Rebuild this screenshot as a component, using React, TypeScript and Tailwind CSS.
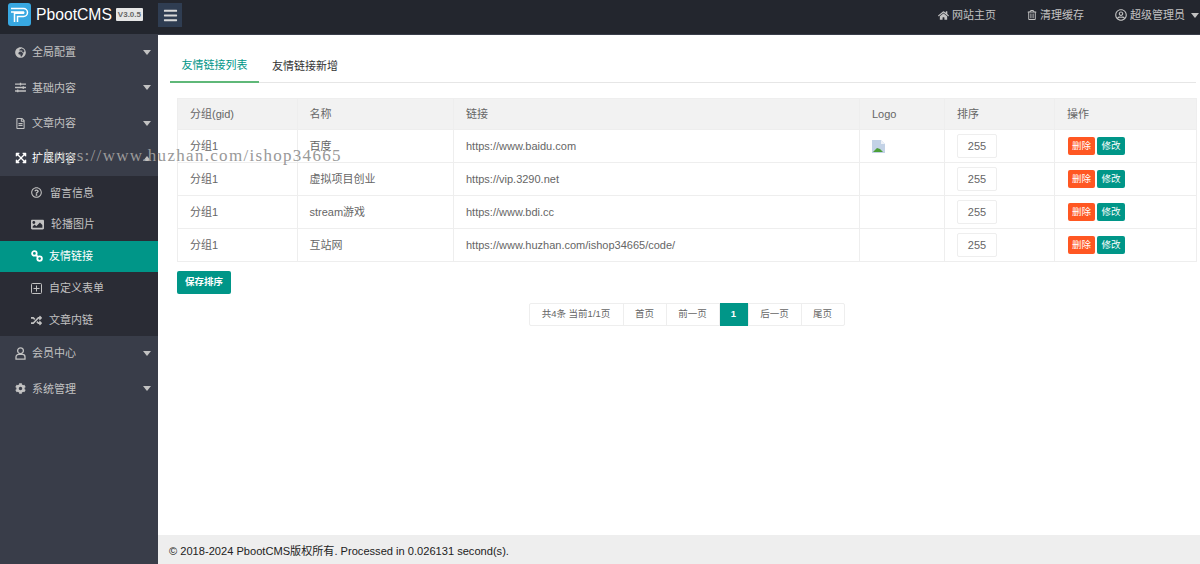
import {
  FaBars, FaCog, FaExpandArrowsAlt, FaGlobeAfrica, FaHome, FaImage,
  FaRandom, FaRegFileAlt, FaRegQuestionCircle, FaRegTrashAlt, FaRegUserCircle, FaSlidersH,
} from "react-icons/fa";

const links = [
  { name: "百度", url: "https://www.baidu.com", logo: true },
  { name: "虚拟项目创业", url: "https://vip.3290.net" },
  { name: "stream游戏", url: "https://www.bdi.cc" },
  { name: "互站网", url: "https://www.huzhan.com/ishop34665/code/" },
];

function Logo() {
  return (
    <svg width="23" height="23" viewBox="0 0 23 23" className="shrink-0">
      <rect width="23" height="23" rx="3" fill="#38a8e2" />
      <path d="M3 5.5h12.5a4 4 0 0 1 0 8H9.5V19" fill="none" stroke="#fff" strokeWidth="1.5" />
      <path d="M3 9h12.5a.8.8 0 0 1 0 1.2H6.5V19" fill="none" stroke="#fff" strokeWidth="1.5" />
    </svg>
  );
}

function BrokenImage() {
  return (
    <svg width="14" height="13" viewBox="0 0 14 13">
      <path d="M0 0h9l4 4v9H0z" fill="#c3d2e6" />
      <path d="M9 0l4 4H9z" fill="#eef2f7" />
      <path d="M1 12l4-4 3 1 3 3z" fill="#4c9f38" />
    </svg>
  );
}

function LinkIcon() {
  return (
    <svg width="12" height="12" viewBox="0 0 12 12" fill="none" stroke="currentColor" strokeWidth="1.8">
      <circle cx="3.4" cy="3.4" r="2.3" />
      <circle cx="8.6" cy="8.6" r="2.3" />
      <path d="M4.8 4.8l2.4 2.4" />
    </svg>
  );
}

function GridIcon() {
  return (
    <svg width="11" height="11" viewBox="0 0 11 11" fill="none" stroke="currentColor" strokeWidth="1">
      <rect x=".5" y=".5" width="10" height="10" rx="1" />
      <path d="M5.5 2.5v6M2.5 5.5h6" />
    </svg>
  );
}

function UserIcon() {
  return (
    <svg width="11" height="13" viewBox="0 0 11 13" fill="none" stroke="currentColor" strokeWidth="1.3">
      <circle cx="5.5" cy="3.7" r="2.9" />
      <path d="M1 12.2V10a2.6 2.6 0 0 1 2.6-2.6h3.8A2.6 2.6 0 0 1 10 10v2.2z" />
    </svg>
  );
}

function Caret({ up }: { up?: boolean }) {
  return up ? (
    <span className="block h-0 w-0 border-x-[4.5px] border-b-[5px] border-x-transparent border-b-[#c2c2c2]" />
  ) : (
    <span className="block h-0 w-0 border-x-[4.5px] border-t-[5px] border-x-transparent border-t-[#c2c2c2]" />
  );
}

function MainItem({ icon, label, open, active }: { icon: React.ReactNode; label: string; open?: boolean; active?: boolean }) {
  return (
    <div className={`flex h-[35.25px] items-center pl-[15px] pr-[7px] text-[11px] ${active ? "text-white" : "text-[#c2c2c2]"}`}>
      <span className="flex w-[17px] justify-start text-[11px]">{icon}</span>
      <span className="flex-1">{label}</span>
      <Caret up={open} />
    </div>
  );
}

function SubItem({ icon, label, active, gap }: { icon: React.ReactNode; label: string; active?: boolean; gap: string }) {
  return (
    <div className={`flex h-[31.8px] items-center pl-[31px] text-[11px] ${gap} ${active ? "bg-[#009688] text-white" : "text-[#c2c2c2]"}`}>
      {icon}
      <span>{label}</span>
    </div>
  );
}

function Sidebar() {
  return (
    <aside className="w-[158px] shrink-0 bg-[#393d49]">
      <MainItem icon={<FaGlobeAfrica />} label="全局配置" />
      <MainItem icon={<FaSlidersH />} label="基础内容" />
      <MainItem icon={<FaRegFileAlt />} label="文章内容" />
      <MainItem icon={<FaExpandArrowsAlt className="text-[12px] text-white" />} label="扩展内容" open active />
      <div className="bg-[#2a2c35] pt-px">
        <SubItem icon={<FaRegQuestionCircle className="text-[11px]" />} label="留言信息" gap="gap-[8px]" />
        <SubItem icon={<FaImage className="text-[13px]" />} label="轮播图片" gap="gap-[7px]" />
        <SubItem icon={<LinkIcon />} label="友情链接" active gap="gap-[6px]" />
        <SubItem icon={<GridIcon />} label="自定义表单" gap="gap-[7px]" />
        <SubItem icon={<FaRandom className="text-[11px]" />} label="文章内链" gap="gap-[7px]" />
      </div>
      <MainItem icon={<UserIcon />} label="会员中心" />
      <MainItem icon={<FaCog />} label="系统管理" />
    </aside>
  );
}

function Header() {
  return (
    <header className="flex h-[35px] shrink-0 items-center border-b border-[#393d49] bg-[#23262e] pb-[4px] text-[11px] text-[#c2c2c2]">
      <div className="ml-[8px] flex items-center">
        <Logo />
        <span className="ml-[5px] text-[15.7px] text-white">PbootCMS</span>
        <span className="ml-[4px] rounded-[1px] bg-[#e6e6e6] px-[2px] py-px text-[8px] font-bold leading-[11px] text-[#666]">V3.0.5</span>
      </div>
      <div className="ml-[15px] flex h-[24px] w-[24px] items-center justify-center bg-[#2f3d52]">
        <FaBars className="text-[15px] text-[#d9d9d9]" />
      </div>
      <div className="ml-auto flex items-center pr-px">
        <span className="flex items-center gap-[3px]"><FaHome className="text-[11px]" />网站主页</span>
        <span className="ml-[31px] flex items-center gap-[3px]"><FaRegTrashAlt className="text-[10px]" />清理缓存</span>
        <span className="ml-[31px] flex items-center gap-[3px]"><FaRegUserCircle className="text-[12px]" />超级管理员<span className="ml-[3px]"><Caret /></span></span>
      </div>
    </header>
  );
}

function LinkTable() {
  const cell = "border border-[#eeeeee] px-[12px] font-normal text-left";
  return (
    <table className="w-[1019px] table-fixed border-collapse text-[11px] text-[#666]">
      <colgroup>
        <col className="w-[119.5px]" />
        <col className="w-[156.5px]" />
        <col className="w-[406px]" />
        <col className="w-[85px]" />
        <col className="w-[110px]" />
        <col className="w-[142px]" />
      </colgroup>
      <thead>
        <tr className="h-[31px] bg-[#f2f2f2]">
          {["分组(gid)", "名称", "链接", "Logo", "排序", "操作"].map((h) => (
            <th key={h} className={cell}>{h}</th>
          ))}
        </tr>
      </thead>
      <tbody>
        {links.map((l) => (
          <tr key={l.url} className="h-[33px]">
            <td className={cell}>分组1</td>
            <td className={cell}>{l.name}</td>
            <td className={cell}>{l.url}</td>
            <td className={cell}>{l.logo && <BrokenImage />}</td>
            <td className={cell}>
              <div className="flex h-[24px] w-[40px] items-center justify-center rounded-[2px] border border-[#eeeeee]">255</div>
            </td>
            <td className={cell}>
              <div className="ml-px flex gap-[2px] text-[9.5px] text-white">
                <span className="flex h-[18px] w-[27px] items-center justify-center rounded-[2px] bg-[#ff5722]">删除</span>
                <span className="flex h-[18px] w-[28px] items-center justify-center rounded-[2px] bg-[#009688]">修改</span>
              </div>
            </td>
          </tr>
        ))}
      </tbody>
    </table>
  );
}

function Pagination() {
  const items = [
    { t: "共4条 当前1/1页", w: "w-[93px]" },
    { t: "首页", w: "w-[43px]" },
    { t: "前一页", w: "w-[53px]" },
    { t: "1", w: "w-[29px]", on: true },
    { t: "后一页", w: "w-[53px]" },
    { t: "尾页", w: "w-[43px]" },
  ];
  return (
    <div className="mt-[9px] flex justify-center">
      <div className="flex h-[23px] rounded-[2px] border border-[#eeeeee] text-[9.5px] text-[#666]">
        {items.map((i, n) => (
          <span
            key={i.t}
            className={`flex items-center justify-center ${i.w} ${n > 0 ? "border-l border-[#eeeeee]" : ""} ${i.on ? "-my-px h-[23px] bg-[#009688] font-bold text-white" : ""}`}
          >
            {i.t}
          </span>
        ))}
      </div>
    </div>
  );
}

export default function App() {
  return (
    <div className="flex h-screen flex-col overflow-hidden bg-white font-['Liberation_Sans','Noto_Sans_CJK_SC',sans-serif]">
      <Header />
      <div className="relative flex min-h-0 flex-1">
        <Sidebar />
        <main className="flex min-w-0 flex-1 flex-col">
          <div className="flex-1 pl-[12px] pr-[4px] pt-[15px]">
            <div className="flex h-[33px] border-b border-[#e6e6e6] text-[11px] text-[#333]">
              <span className="-mb-px flex w-[89px] items-center justify-center border-b-2 border-[#5fb878] text-[#009688]">友情链接列表</span>
              <span className="flex w-[92px] items-center justify-center">友情链接新增</span>
            </div>
            <div className="mt-[15px] pl-[7px]">
              <LinkTable />
              <button className="mt-[9px] block h-[23px] w-[54px] rounded-[2px] bg-[#009688] text-[9.5px] font-bold text-white">保存排序</button>
              <Pagination />
            </div>
          </div>
          <footer className="flex h-[29px] shrink-0 items-center bg-[#eeeeee] pl-[11px] pt-[4px] text-[11.1px] text-[#222]">
            © 2018-2024 PbootCMS版权所有. Processed in 0.026131 second(s).
          </footer>
        </main>
        {/* watermark over the page */}
        <div className="pointer-events-none absolute left-[45px] top-[108px] whitespace-nowrap font-['Liberation_Serif',serif] text-[17px] tracking-[1.3px] text-[#999999]">
          https://www.huzhan.com/ishop34665
        </div>
      </div>
    </div>
  );
}
